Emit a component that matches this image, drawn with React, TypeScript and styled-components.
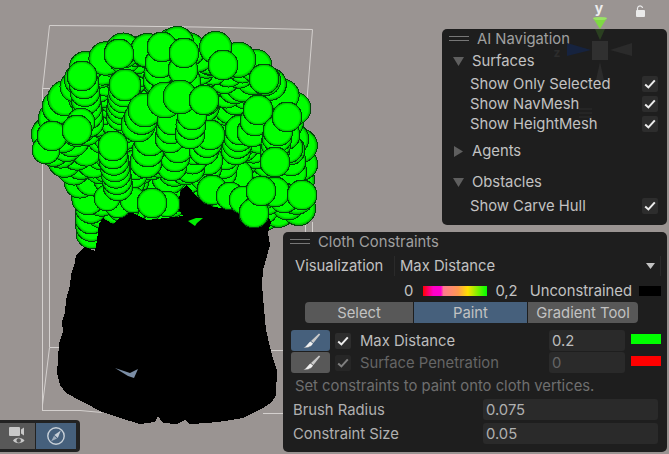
import React from "react";
import styled, { createGlobalStyle } from "styled-components";

const GlobalStyle = createGlobalStyle`
  html, body {
    margin: 0;
    padding: 0;
    background: #9a9492;
    overflow: hidden;
  }
`;

const Viewport = styled.div`
  position: relative;
  width: 669px;
  height: 454px;
  overflow: hidden;
  background: #9a9492;
  font-family: Inter, "Noto Sans", sans-serif;
  font-size: 14.8px;
  color: #c2c2c2;
`;

const SceneCanvas = styled.svg`
  position: absolute;
  inset: 0;
`;

const Panel = styled.section`
  position: absolute;
  box-sizing: border-box;
  background: #1e1e1e;
  border-radius: 5px;
  display: flex;
  flex-direction: column;
`;

const NavPanel = styled(Panel)`
  left: 442px;
  top: 29px;
  width: 225px;
  height: 196px;
`;

const ClothPanel = styled(Panel)`
  left: 283px;
  top: 232px;
  width: 384px;
  height: 220px;
`;

const PanelHeader = styled.header`
  box-sizing: border-box;
  height: 18px;
  padding: 1px 0 0 7px;
  display: flex;
  align-items: center;
  gap: 8px;
  color: #a0a0a0;
`;

const Grip = styled.span`
  width: 20px;
  height: 3px;
  border-top: 1px solid #777;
  border-bottom: 1px solid #777;
`;

const Foldout = styled.div<{ $top: number }>`
  height: 20px;
  margin-top: ${(p) => p.$top}px;
  padding-left: 11px;
  display: flex;
  align-items: center;
  gap: 8px;
`;

const CheckRow = styled.div<{ $top?: number }>`
  height: 20px;
  margin-top: ${(p) => p.$top ?? 0}px;
  padding: 0 9px 0 28px;
  display: flex;
  align-items: center;
  justify-content: space-between;
`;

const CheckBox = styled.span<{ $dim?: boolean }>`
  width: 16px;
  height: 16px;
  border-radius: 2px;
  background: ${(p) => (p.$dim ? "#262626" : "#2d2d2d")};
  display: flex;
  align-items: center;
  justify-content: center;
  flex: none;
  svg {
    display: block;
    opacity: ${(p) => (p.$dim ? 0.45 : 1)};
  }
`;

const VisualRow = styled.div`
  height: 20px;
  margin-top: 6px;
  display: flex;
  align-items: center;
`;

const VisualLabel = styled.span`
  width: 112px;
  padding-left: 12px;
  box-sizing: border-box;
  height: 100%;
  display: flex;
  align-items: center;
  border-right: 1px solid #2a2a2a;
  flex: none;
`;

const VisualValue = styled.span`
  flex: 1;
  height: 100%;
  padding: 0 5px;
  display: flex;
  align-items: center;
  justify-content: space-between;
  margin-right: 6px;
  border-right: 1px solid #2a2a2a;
`;

const LegendRow = styled.div`
  height: 20px;
  margin-top: 5px;
  padding-right: 6px;
  display: flex;
  align-items: center;
  justify-content: flex-end;
`;

const GradientBar = styled.span`
  width: 64px;
  height: 10px;
  margin: 0 8px 0 10px;
  background: linear-gradient(
    to right,
    #ff0000 0%,
    #ff00c8 16%,
    #ff00d0 28%,
    #ff7a90 32%,
    #ff9a50 55%,
    #ffe000 70%,
    #00ff00 100%
  );
`;

const UnconstrainedLabel = styled.span`
  margin: 0 7px 0 12px;
`;

const Swatch = styled.span<{ $color: string; $w: number }>`
  width: ${(p) => p.$w}px;
  height: 10px;
  background: ${(p) => p.$color};
  flex: none;
`;

const ToolBar = styled.div`
  height: 21px;
  margin: 1px 29px 0 22px;
  display: grid;
  grid-template-columns: 108px 113px 1fr;
  gap: 1px;
  border-radius: 4px;
  overflow: hidden;
`;

const ToolButton = styled.span<{ $active?: boolean }>`
  background: ${(p) => (p.$active ? "#46607c" : "#585858")};
  color: #c2c2c2;
  display: flex;
  align-items: center;
  justify-content: center;
`;

const PaintRow = styled.div<{ $top: number; $dim?: boolean }>`
  height: 21px;
  margin-top: ${(p) => p.$top}px;
  padding-left: 8px;
  display: flex;
  align-items: center;
  color: ${(p) => (p.$dim ? "#656565" : "#bcbcbc")};
`;

const BrushButton = styled.span<{ $active?: boolean }>`
  width: 39px;
  height: 21px;
  border-radius: 3px;
  background: ${(p) => (p.$active ? "#46607c" : "#585858")};
  display: flex;
  align-items: center;
  justify-content: center;
  flex: none;
  margin-right: 5px;
`;

const PaintName = styled.span`
  width: 189px;
  margin-left: 9px;
`;

const ValueField = styled.span<{ $w: number }>`
  box-sizing: border-box;
  width: ${(p) => p.$w}px;
  height: 21px;
  padding-left: 3px;
  background: #2a2a2a;
  border-radius: 3px;
  display: flex;
  align-items: center;
  flex: none;
`;

const PaintSwatch = styled(Swatch)`
  margin-left: 6px;
  margin-top: -4px;
`;

const Hint = styled.p`
  margin: 3px 0 0;
  height: 20px;
  padding-left: 12px;
  color: #6f6f6f;
  display: flex;
  align-items: center;
`;

const FieldRow = styled.div<{ $top: number }>`
  height: 21px;
  margin-top: ${(p) => p.$top}px;
  padding-left: 10px;
  display: flex;
  align-items: center;
  color: #b0b0b0;
  span:first-child {
    width: 190px;
  }
`;

const SceneToolbar = styled.nav`
  position: absolute;
  left: 0;
  top: 420px;
  width: 80px;
  height: 32px;
  box-sizing: border-box;
  padding: 3px 4px 3px 0;
  background: #222;
  border-radius: 0 4px 4px 0;
  display: grid;
  grid-template-columns: 35px 40px;
  gap: 1px;
`;

const SceneTool = styled.span<{ $active?: boolean }>`
  background: ${(p) => (p.$active ? "#46607c" : "#585858")};
  display: flex;
  align-items: center;
  justify-content: center;
`;

const Gizmo = styled.svg`
  position: absolute;
  left: 540px;
  top: 0;
  pointer-events: none;
`;

const GizmoLabel = styled.text<{ $dim?: boolean }>`
  font-family: Inter, sans-serif;
  font-weight: 700;
  font-size: ${(p) => (p.$dim ? 12 : 14)}px;
  fill: ${(p) => (p.$dim ? "#2c2c2c" : "#ececec")};
  text-anchor: middle;
`;

type Circle = { x: number; y: number; r: number };

// a run of overlapping spheres: the first one ends up on top
const stack = (x0: number, y0: number, x1: number, y1: number, n: number, r = 15): Circle[] =>
  Array.from({ length: n }, (_, i) => ({
    x: x1 + ((x0 - x1) * i) / Math.max(n - 1, 1),
    y: y1 + ((y0 - y1) * i) / Math.max(n - 1, 1),
    r,
  }));

// y, first x, last x of the hair mass
const rows: [number, number, number][] = [
  [208, 95, 300],
  [195, 88, 306],
  [180, 80, 306],
  [165, 62, 303],
  [150, 50, 301],
  [135, 50, 298],
  [122, 58, 296],
  [110, 62, 292],
  [95, 64, 290],
  [82, 74, 278],
  [70, 86, 260],
  [60, 105, 240],
  [52, 125, 222],
  [46, 150, 190],
];

// pseudo random, the same picture on every load
const fill: Circle[] = [];
let seed = 11;
const rnd = () => {
  seed = (seed * 16807) % 2147483647;
  return seed / 2147483647;
};
rows.forEach(([y, from, to]) => {
  for (let x = from; x <= to; x += 10) {
    fill.push({ x: x + rnd() * 8 - 4, y: y + rnd() * 10 - 5, r: 15 + rnd() * 3 });
  }
});

// upper spheres cover lower ones, which leaves the crescents of the reference
const backCircles: Circle[] = [
  ...fill,
  { x: 266, y: 216, r: 14 },
  ...stack(91, 218, 92, 233, 3, 16),
].sort((a, b) => b.y - a.y);

// larger lumps of the middle of the mass, read off the reference
const midCircles: Circle[] = [
  ...stack(238, 175, 232, 190, 3),
  ...stack(225, 155, 222, 172, 3),
  ...stack(208, 160, 205, 176, 3),
  ...stack(195, 150, 190, 168, 3),
  ...stack(178, 148, 172, 166, 3),
  ...stack(135, 165, 130, 182, 3),
  ...stack(150, 140, 146, 162, 3, 16),
  ...stack(290, 150, 292, 172, 3),
  ...stack(285, 135, 288, 148, 2),
  ...stack(240, 130, 236, 150, 4),
  ...stack(258, 110, 252, 132, 3),
  ...stack(210, 135, 204, 150, 3),
  ...stack(125, 85, 122, 115, 6, 16),
  ...stack(145, 110, 138, 125, 3, 17),
  ...stack(172, 120, 170, 138, 3),
  ...stack(192, 115, 190, 134, 3),
  ...stack(160, 63, 158, 80, 3),
  ...stack(183, 70, 186, 82, 2),
  { x: 165, y: 100, r: 18 },
  { x: 180, y: 97, r: 17 },
  { x: 204, y: 100, r: 15 },
];

const bodyOutline =
  "76,255 75,262 71,275 70,285 66,300 65,313 62,322 63,332 59,343 58,360 57,373 60,385 66,393 83,402 102,412 120,418 140,424 155,422 158,416 163,423 177,424 185,420 190,424 207,423 225,421 243,418 263,408 272,402 276,395 277,370 272,355 270,347 266,330 265,320 262,285 263,270 265,263 270,245 268,233 271,222 268,215 240,215 233,209 213,207 197,197 187,185 181,190 177,207 183,216 147,220 127,210 113,224 103,218 99,224 97,240 95,251 85,247";

const frontCircles: Circle[] = [
  { x: 118, y: 205, r: 13 },
  { x: 107, y: 198, r: 13 },
  { x: 133, y: 200, r: 13 },
  { x: 167, y: 204, r: 13 },
  { x: 152, y: 203, r: 15 },
  { x: 212, y: 190, r: 15 },
  { x: 230, y: 196, r: 14 },
  { x: 243, y: 200, r: 14 },
  { x: 254, y: 213, r: 15 },
  { x: 284, y: 198, r: 15 },
  { x: 275, y: 192, r: 15 },
  ...stack(278, 131, 275, 150, 4),
  { x: 287, y: 117, r: 15 },
  { x: 261, y: 191, r: 15 },
  { x: 302, y: 195, r: 15 },
  { x: 275, y: 162, r: 15 },
  { x: 46, y: 150, r: 14 },
  { x: 52, y: 136, r: 15 },
  ...stack(84, 84, 89, 122, 6),
  { x: 81, y: 122, r: 14 },
  { x: 77, y: 130, r: 15 },
  ...stack(113, 154, 118, 186, 6),
  { x: 113, y: 146, r: 15 },
  { x: 82, y: 76, r: 15 },
  { x: 119, y: 54, r: 15 },
  { x: 162, y: 47, r: 15 },
  { x: 184, y: 53, r: 15 },
  { x: 223, y: 65, r: 15 },
  { x: 264, y: 79, r: 15 },
];

const Spheres = ({ items }: { items: Circle[] }) => (
  <g shapeRendering="crispEdges">
    {items.map((c, i) => (
      <circle key={i} cx={c.x} cy={c.y} r={c.r} fill="url(#sphere)" stroke="#00480a" strokeWidth={1} />
    ))}
  </g>
);

const Scene = () => (
  <SceneCanvas width={669} height={454} viewBox="0 0 669 454">
    <defs>
      <radialGradient id="sphere">
        <stop offset="0.82" stopColor="#00ff00" />
        <stop offset="1" stopColor="#00a400" />
      </radialGradient>
    </defs>
    <g fill="none" stroke="#d4d0ce" strokeWidth={1}>
      <polyline points="42.5,411 42.5,90 49.5,25.5 119,26 197,27 312.5,29.5 307,100" />
      <polyline points="305.5,215 305.5,240" />
      <polyline points="312.5,222 312.5,240" />
      <polyline points="42.5,88.5 56,88.5" />
      <polyline points="49.5,347.5 42.5,405" />
      <polyline points="49.5,347.5 62,347.5" />
      <polyline points="42.5,410.5 80,410.5 102,412.5" />
      <polyline points="49.5,220 49.5,347" />
      <polyline points="270,350.5 291,350.5" />
      <polyline points="263,413.5 291,413.5" />
    </g>
    <Spheres items={backCircles} />
    <Spheres items={midCircles} />
    <polygon points={bodyOutline} fill="#000" shapeRendering="crispEdges" />
    <polygon points="188,221 196,218 203,218 197,223 195,226" fill="#00ef00" />
    <polygon points="115,368 130,373 138,369 134,378 128,376" fill="#7b8ea6" />
    <Spheres items={frontCircles} />
  </SceneCanvas>
);

const Triangle = ({ open }: { open: boolean }) => (
  <svg width={11} height={11} viewBox="0 0 11 11">
    <polygon points={open ? "0,1 11,1 5.5,10" : "1,0 10,5.5 1,11"} fill="#5f5f5f" />
  </svg>
);

const Tick = () => (
  <svg width={12} height={10} viewBox="0 0 12 10">
    <polyline points="1.2,5.5 4.4,8.4 10.8,1.4" fill="none" stroke="#ededed" strokeWidth={2} />
  </svg>
);

const BrushIcon = () => (
  <svg width={22} height={18} viewBox="0 0 22 18">
    <path d="M11 9 L19 1.4 L20.2 2.4 L13.4 11 Z" fill="#c9c9c9" />
    <path d="M10.4 9.4 L13 11.6 C11.6 14.6 8 16.2 3.4 15.6 C6.4 14.8 7.6 11.4 10.4 9.4 Z" fill="#f0f0f0" />
    <path d="M3.4 15.6 C6 15.4 9 15 11.4 13.4 C9.6 15.6 6.8 16.4 3.4 15.6 Z" fill="#8a8a8a" />
  </svg>
);

const CameraEyeIcon = () => (
  <svg width={20} height={20} viewBox="0 0 20 20">
    <rect x={1} y={1} width={11} height={9} rx={1} fill="#c8c8c8" />
    <polygon points="13,3.5 16,1.5 16,9.5 13,7.5" fill="#c8c8c8" />
    <path d="M5 14.5 C7.5 10.8 13.5 10.8 16.5 14.5 C13.5 18.2 7.5 18.2 5 14.5 Z" fill="#c8c8c8" />
    <circle cx={10.7} cy={14.5} r={2.2} fill="#585858" />
  </svg>
);

const CompassIcon = () => (
  <svg width={20} height={20} viewBox="0 0 20 20">
    <circle cx={10} cy={10} r={8.2} fill="none" stroke="#c8d0d8" strokeWidth={1.4} />
    <path d="M14.8 4.6 L11.8 12 L8.4 9 Z" fill="#c8d0d8" />
    <path d="M8 9.8 L11 12.6 L5.2 15.2 Z" fill="#c8d0d8" opacity={0.7} />
  </svg>
);

const OrientationGizmo = () => (
  <Gizmo width={129} height={120} viewBox="0 0 129 120">
    <GizmoLabel x={59} y={13}>y</GizmoLabel>
    <polygon points="53,18 67,18 60,29" fill="#7ed943" />
    <ellipse cx={60} cy={18.5} rx={7} ry={1.6} fill="#9ae266" />
    <polygon points="55,29 65,29 60,40" fill="#2a3f20" />
    <rect x={52} y={41} width={16} height={19} fill="#303030" />
    <polygon points="27,43 27,56 51,50" fill="#16233f" />
    <polygon points="92,43 92,56 70,50" fill="#2b2b2b" />
    <polygon points="56,80 64,80 60,62" fill="#2b2b2b" />
    <GizmoLabel x={17} y={57} $dim>z</GizmoLabel>
    <g stroke="#2c2c2c">
      <line x1={39} y1={109} x2={52} y2={109} />
      <line x1={39} y1={113} x2={52} y2={113} />
      <line x1={39} y1={117} x2={52} y2={117} />
    </g>
    <rect x={96} y={10} width={9} height={7} rx={1} fill="#eaeaea" />
    <path d="M97.5 10 V8 A2.6 2.6 0 0 1 102.6 8" fill="none" stroke="#eaeaea" strokeWidth={1.2} />
  </Gizmo>
);

const App = () => (
  <Viewport>
    <GlobalStyle />
    <Scene />

    <NavPanel>
      <PanelHeader>
        <Grip />
        <span>AI Navigation</span>
      </PanelHeader>
      <Foldout $top={4}>
        <Triangle open />
        <span>Surfaces</span>
      </Foldout>
      <CheckRow $top={3}>
        <span>Show Only Selected</span>
        <CheckBox><Tick /></CheckBox>
      </CheckRow>
      <CheckRow>
        <span>Show NavMesh</span>
        <CheckBox><Tick /></CheckBox>
      </CheckRow>
      <CheckRow>
        <span>Show HeightMesh</span>
        <CheckBox><Tick /></CheckBox>
      </CheckRow>
      <Foldout $top={7}>
        <Triangle open={false} />
        <span>Agents</span>
      </Foldout>
      <Foldout $top={11}>
        <Triangle open />
        <span>Obstacles</span>
      </Foldout>
      <CheckRow $top={4}>
        <span>Show Carve Hull</span>
        <CheckBox><Tick /></CheckBox>
      </CheckRow>
    </NavPanel>

    <OrientationGizmo />

    <ClothPanel>
      <PanelHeader>
        <Grip />
        <span>Cloth Constraints</span>
      </PanelHeader>
      <VisualRow>
        <VisualLabel>Visualization</VisualLabel>
        <VisualValue>
          <span>Max Distance</span>
          <svg width={9} height={6} viewBox="0 0 9 6">
            <polygon points="0,0 9,0 4.5,6" fill="#c2c2c2" />
          </svg>
        </VisualValue>
      </VisualRow>
      <LegendRow>
        <span>0</span>
        <GradientBar />
        <span>0,2</span>
        <UnconstrainedLabel>Unconstrained</UnconstrainedLabel>
        <Swatch $color="#000" $w={22} />
      </LegendRow>
      <ToolBar>
        <ToolButton>Select</ToolButton>
        <ToolButton $active>Paint</ToolButton>
        <ToolButton>Gradient Tool</ToolButton>
      </ToolBar>
      <PaintRow $top={7}>
        <BrushButton $active><BrushIcon /></BrushButton>
        <CheckBox><Tick /></CheckBox>
        <PaintName>Max Distance</PaintName>
        <ValueField $w={76}>0.2</ValueField>
        <PaintSwatch $color="#00ff00" $w={30} />
      </PaintRow>
      <PaintRow $top={1} $dim>
        <BrushButton><BrushIcon /></BrushButton>
        <CheckBox $dim><Tick /></CheckBox>
        <PaintName>Surface Penetration</PaintName>
        <ValueField $w={76}>0</ValueField>
        <PaintSwatch $color="#ff0000" $w={30} />
      </PaintRow>
      <Hint>Set constraints to paint onto cloth vertices.</Hint>
      <FieldRow $top={3}>
        <span>Brush Radius</span>
        <ValueField $w={175}>0.075</ValueField>
      </FieldRow>
      <FieldRow $top={3}>
        <span>Constraint Size</span>
        <ValueField $w={175}>0.05</ValueField>
      </FieldRow>
    </ClothPanel>

    <SceneToolbar>
      <SceneTool><CameraEyeIcon /></SceneTool>
      <SceneTool $active><CompassIcon /></SceneTool>
    </SceneToolbar>
  </Viewport>
);

export default App;
